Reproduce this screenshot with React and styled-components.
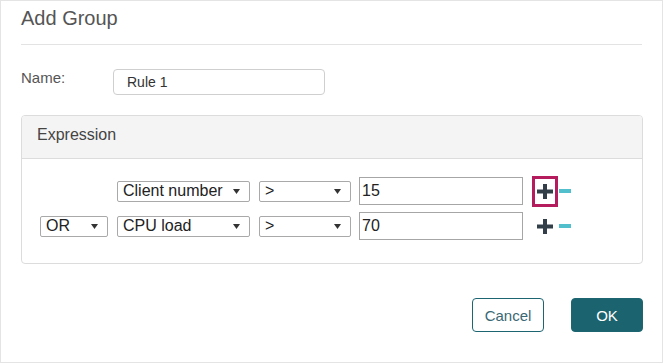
import React from "react"
import styled, { createGlobalStyle } from "styled-components"

const GlobalStyle = createGlobalStyle`
  body {
    margin: 0;
    background: #fff;
    font-family: "Liberation Sans", Arial, sans-serif;
  }
`

const Frame = styled.div`
  width: 663px;
  height: 363px;
  box-sizing: border-box;
  border: 1px solid #e4e4e4;
  padding: 0 19px 0 20px;
  display: flex;
  flex-direction: column;
`

const Header = styled.div`
  height: 44px;
  box-sizing: border-box;
  padding-top: 5px;
  border-bottom: 1px solid #e3e3e3;
  margin-right: 1px;
`

const Title = styled.h1`
  margin: 0;
  font-size: 20px;
  line-height: 24px;
  font-weight: normal;
  color: #555;
`

const NameRow = styled.div`
  display: flex;
  align-items: flex-start;
  margin-top: 24px;
`

const Label = styled.label`
  width: 92px;
  font-size: 15px;
  line-height: 18px;
  color: #555;
`

const NameInput = styled.div`
  width: 212px;
  height: 26px;
  box-sizing: border-box;
  border: 1px solid #cfcfcf;
  border-radius: 4px;
  padding-left: 13px;
  font-size: 14px;
  line-height: 24px;
  color: #333;
`

const Panel = styled.div`
  margin-top: 20px;
  border: 1px solid #dcdcdc;
  border-radius: 4px;
  overflow: hidden;
`

const PanelHeader = styled.div`
  height: 43px;
  box-sizing: border-box;
  background: #f4f4f4;
  border-bottom: 1px solid #dcdcdc;
  padding: 9px 0 0 15px;
  font-size: 16px;
  line-height: 20px;
  color: #444;
`

const PanelBody = styled.div`
  padding: 18px 0 23px 18px;
  display: flex;
  flex-direction: column;
  gap: 7px;
`

const Row = styled.div`
  display: flex;
  align-items: center;
  height: 28px;
`

const Select = styled.div`
  width: ${p => p.w}px;
  height: 21px;
  box-sizing: border-box;
  margin-right: ${p => p.gap}px;
  border: 1px solid #a9a9a9;
  border-radius: 2px;
  display: flex;
  align-items: center;
  justify-content: space-between;
  padding: 0 9px 0 5px;
  font-size: 16px;
  color: #222;
  background: #fff;
`

const Placeholder = styled.div`
  width: ${p => p.w}px;
  margin-right: ${p => p.gap}px;
`

const Arrow = () => (
  <svg width="7" height="5" viewBox="0 0 7 5">
    <path d="M0 0 L7 0 L3.5 5 Z" fill="#333" />
  </svg>
)

const ValueInput = styled.div`
  width: 164px;
  height: 28px;
  box-sizing: border-box;
  border: 1px solid #a6a6a6;
  padding-left: 2px;
  font-size: 16px;
  line-height: 26px;
  color: #222;
`

const PlusBox = styled.div`
  width: 26px;
  height: 31px;
  box-sizing: border-box;
  margin-left: 9px;
  border: 3px solid ${p => (p.highlighted ? "#b51c5d" : "transparent")};
  display: flex;
  align-items: center;
  justify-content: center;
  padding-right: 1px;
`

const Minus = styled.div`
  width: 12px;
  height: 4px;
  margin-left: 1px;
  background: #52bfcc;
`

const PlusIcon = () => (
  <svg width="16" height="15" viewBox="0 0 16 15">
    <rect x="0" y="5.5" width="16" height="4" fill="#323e48" />
    <rect x="6" y="0" width="4" height="15" fill="#323e48" />
  </svg>
)

const Footer = styled.div`
  display: flex;
  justify-content: flex-end;
  gap: 27px;
  margin-top: 34px;
`

const Button = styled.button`
  width: 72px;
  height: 34px;
  box-sizing: border-box;
  border-radius: 4px;
  border: 1px solid #1d6571;
  background: ${p => (p.primary ? "#1c6370" : "#fff")};
  color: ${p => (p.primary ? "#fff" : "#3a6874")};
  font-family: "Liberation Sans", Arial, sans-serif;
  font-size: 15px;
  padding: 0;
`

const rules = [
  { logic: null, field: "Client number", op: ">", value: "15", highlighted: true },
  { logic: "OR", field: "CPU load", op: ">", value: "70", highlighted: false },
]

export default function App() {
  return (
    <>
      <GlobalStyle />
      <Frame>
        <Header>
          <Title>Add Group</Title>
        </Header>
        <NameRow>
          <Label>Name:</Label>
          <NameInput>Rule 1</NameInput>
        </NameRow>
        <Panel>
          <PanelHeader>Expression</PanelHeader>
          <PanelBody>
            {rules.map(rule => (
              <Row key={rule.field}>
                {rule.logic ? (
                  <Select w={68} gap={9}>
                    {rule.logic}
                    <Arrow />
                  </Select>
                ) : (
                  <Placeholder w={68} gap={9} />
                )}
                <Select w={133} gap={9}>
                  {rule.field}
                  <Arrow />
                </Select>
                <Select w={92} gap={8}>
                  {rule.op}
                  <Arrow />
                </Select>
                <ValueInput>{rule.value}</ValueInput>
                <PlusBox highlighted={rule.highlighted}>
                  <PlusIcon />
                </PlusBox>
                <Minus />
              </Row>
            ))}
          </PanelBody>
        </Panel>
        <Footer>
          <Button>Cancel</Button>
          <Button primary>OK</Button>
        </Footer>
      </Frame>
    </>
  )
}
